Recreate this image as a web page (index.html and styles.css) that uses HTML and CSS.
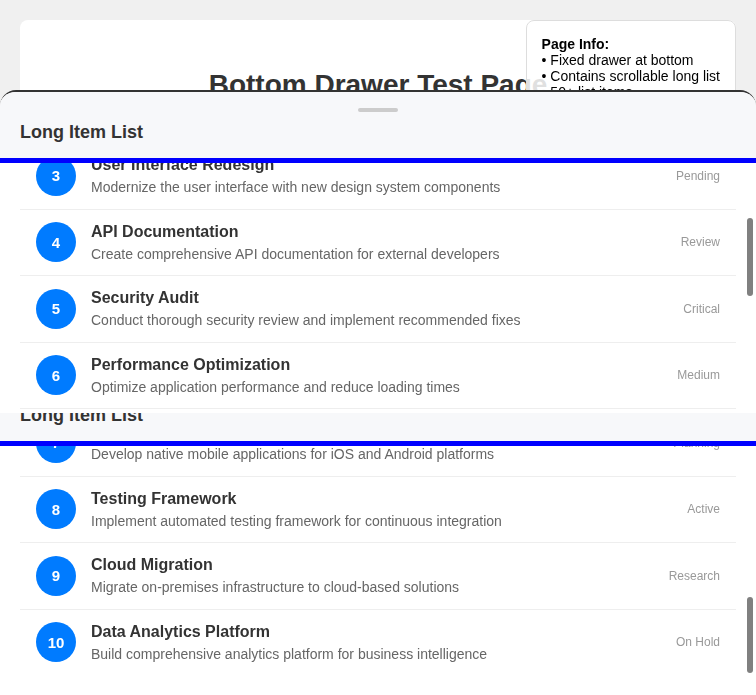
FILE: index.html
```html
<html>
<head>
<meta http-equiv="content-type" content="text/html; charset=utf-8">
<meta name="viewport" content="width=device-width, initial-scale=1">
<link rel="stylesheet" href="styles.css">
<title>Bottom Drawer Test Page</title>
</head>
<body>
<div class=card>
<h1>Bottom Drawer Test Page</h1>
</div>
<div class=pageinfo>
<b>Page Info:</b><br>
&bull; Fixed drawer at bottom<br>
&bull; Contains scrollable long list<br>
&bull; 50+ list items<br>
&bull; Test scrolling behavior
</div>
<div class=drawer>
<div class=sheet>
<div class=head>
<div class=handle></div>
<h2>Long Item List</h2>
</div>
<div class=view>
<div class="list top">
<div class=row><div class=num>3</div><div class=info><div class=title>User Interface Redesign</div><div class=desc>Modernize the user interface with new design system components</div></div><div class=status>Pending</div></div>
<div class=row><div class=num>4</div><div class=info><div class=title>API Documentation</div><div class=desc>Create comprehensive API documentation for external developers</div></div><div class=status>Review</div></div>
<div class=row><div class=num>5</div><div class=info><div class=title>Security Audit</div><div class=desc>Conduct thorough security review and implement recommended fixes</div></div><div class=status>Critical</div></div>
<div class=row><div class=num>6</div><div class=info><div class=title>Performance Optimization</div><div class=desc>Optimize application performance and reduce loading times</div></div><div class=status>Medium</div></div>
<div class=row><div class=num>7</div><div class=info><div class=title>Mobile App Development</div><div class=desc>Develop native mobile applications for iOS and Android platforms</div></div><div class=status>Planning</div></div>
</div>
<div class="thumb first"></div>
</div>
</div>
<div class="sheet again">
<div class=head>
<div class=handle></div>
<h2>Long Item List</h2>
</div>
<div class=view>
<div class="list bottom">
<div class=row><div class=num>7</div><div class=info><div class=title>Mobile App Development</div><div class=desc>Develop native mobile applications for iOS and Android platforms</div></div><div class=status>Planning</div></div>
<div class=row><div class=num>8</div><div class=info><div class=title>Testing Framework</div><div class=desc>Implement automated testing framework for continuous integration</div></div><div class=status>Active</div></div>
<div class=row><div class=num>9</div><div class=info><div class=title>Cloud Migration</div><div class=desc>Migrate on-premises infrastructure to cloud-based solutions</div></div><div class=status>Research</div></div>
<div class=row><div class=num>10</div><div class=info><div class=title>Data Analytics Platform</div><div class=desc>Build comprehensive analytics platform for business intelligence</div></div><div class=status>On Hold</div></div>
</div>
<div class="thumb second"></div>
</div>
</div>
</div>
</body>
</html>
```

FILE: styles.css
```css
html{overflow:hidden}
body{margin:0;padding:20px;background:#f0f0f0;font-family:"Liberation Sans",Arial,sans-serif;color:#333}
.card{background:#fff;border-radius:8px;padding:49px 20px 600px}
.card h1{margin:0;font-size:28px;text-align:center;color:#333}
.pageinfo{position:fixed;top:20px;right:20px;z-index:10;padding:15px;font-size:14px;color:#000;
background:rgba(255,255,255,0.85);border:1px solid #ddd;border-radius:8px}
.drawer{position:fixed;top:90px;left:0;right:0;bottom:0;z-index:20;display:flex;flex-direction:column;
background:#fff;border-top:2px solid #333;border-radius:16px 16px 0 0;overflow:hidden}
.head{background:#f7f8fa;padding:16px 20px 15px;border-bottom:5px solid #00f}
.handle{width:40px;height:4px;background:#ccc;border-radius:2px;margin:0 auto 10px}
.head h2{margin:0;font-size:18px;color:#333}
.view{position:relative;height:250px;overflow:hidden}
.again{flex:1;overflow:hidden}
.again .head{margin-top:-38px}
.list{padding:0 20px}
.list.top{margin-top:-20px}
.list.bottom{margin-top:-36px}
.row{display:flex;align-items:center;gap:15px;padding:12.75px 16px;border-bottom:1px solid #eee}
.list.bottom .row:last-child{border-bottom:0}
.num{flex:none;width:40px;height:40px;border-radius:50%;background:#007bff;color:#fff;
font-weight:bold;font-size:15px;display:flex;align-items:center;justify-content:center}
.info{flex:1}
.title{font-size:16px;font-weight:bold;color:#333;margin-bottom:5px}
.desc{font-size:14px;color:#666}
.status{font-size:12px;color:#999}
.thumb{position:absolute;right:3px;width:6px;background:#808080;border-radius:3px}
.thumb.first{top:55px;height:78px}
.thumb.second{top:151px;height:76px}
```
